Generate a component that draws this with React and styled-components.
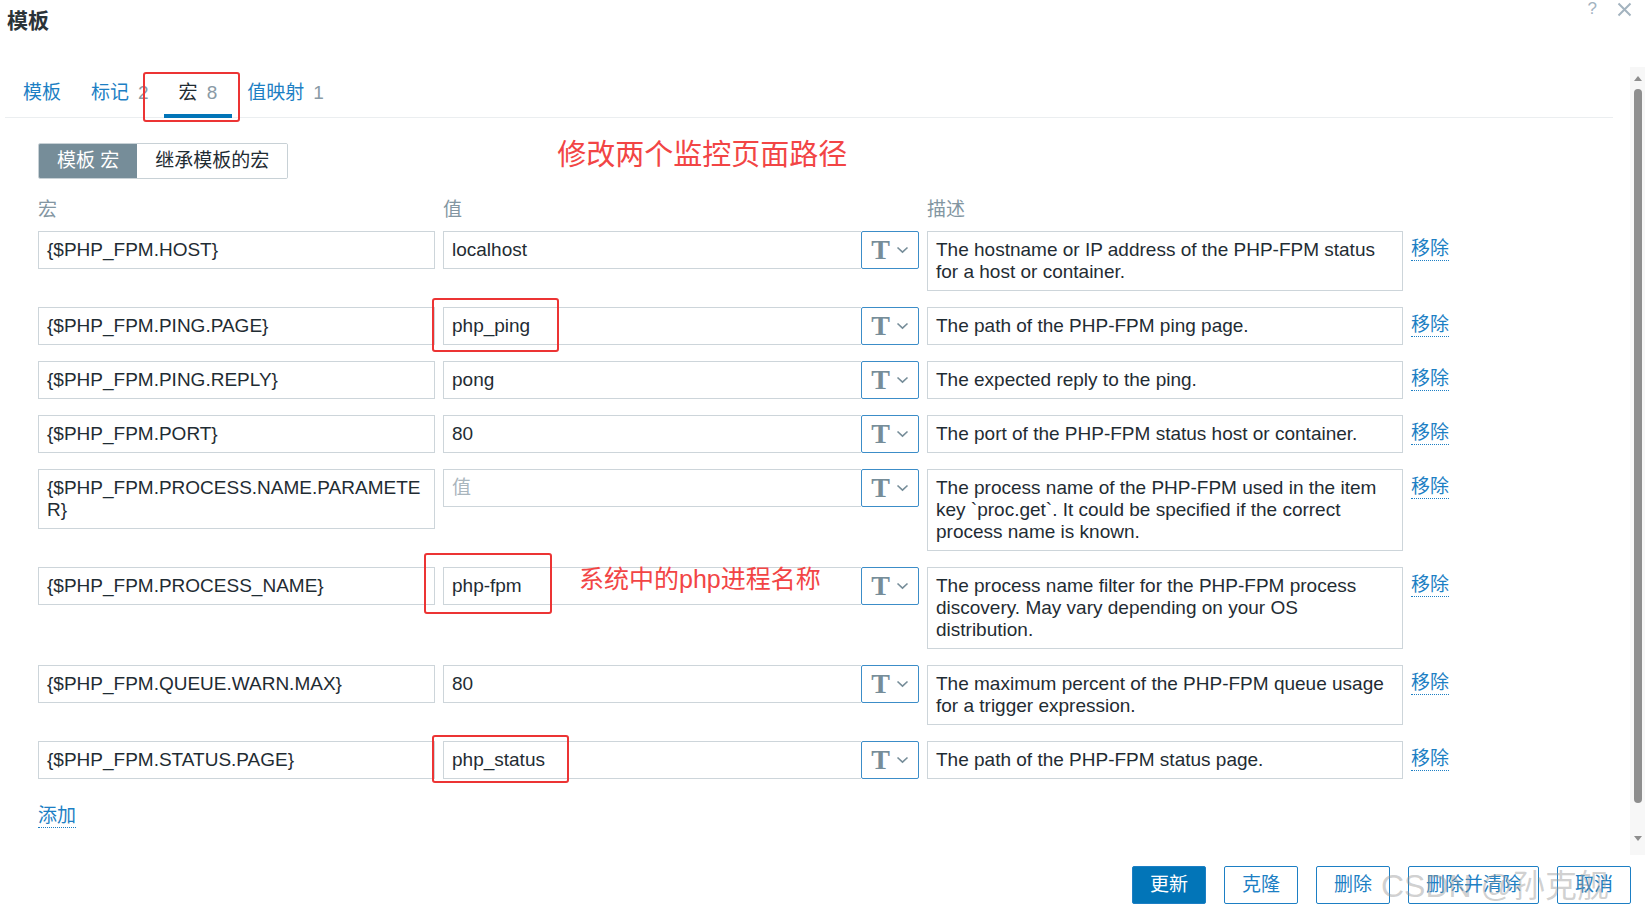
import React from 'react';
import styled, { createGlobalStyle } from 'styled-components';

const rows = [
  { macro: ['{$PHP_FPM.HOST}'], value: 'localhost', desc: ['The hostname or IP address of the PHP-FPM status', 'for a host or container.'] },
  { macro: ['{$PHP_FPM.PING.PAGE}'], value: 'php_ping', desc: ['The path of the PHP-FPM ping page.'], mark: { t: -9, l: -11, w: 127, h: 54 } },
  { macro: ['{$PHP_FPM.PING.REPLY}'], value: 'pong', desc: ['The expected reply to the ping.'] },
  { macro: ['{$PHP_FPM.PORT}'], value: '80', desc: ['The port of the PHP-FPM status host or container.'] },
  { macro: ['{$PHP_FPM.PROCESS.NAME.PARAMETE', 'R}'], value: '', desc: ['The process name of the PHP-FPM used in the item', 'key `proc.get`. It could be specified if the correct', 'process name is known.'] },
  { macro: ['{$PHP_FPM.PROCESS_NAME}'], value: 'php-fpm', desc: ['The process name filter for the PHP-FPM process', 'discovery. May vary depending on your OS', 'distribution.'], mark: { t: -14, l: -19, w: 128, h: 61 }, note: '系统中的php进程名称' },
  { macro: ['{$PHP_FPM.QUEUE.WARN.MAX}'], value: '80', desc: ['The maximum percent of the PHP-FPM queue usage', 'for a trigger expression.'] },
  { macro: ['{$PHP_FPM.STATUS.PAGE}'], value: 'php_status', desc: ['The path of the PHP-FPM status page.'], mark: { t: -6, l: -11, w: 137, h: 48 } },
];

const tabs = [
  { label: '模板' },
  { label: '标记', count: 2 },
  { label: '宏', count: 8, active: true },
  { label: '值映射', count: 1 },
];

function Chevron() {
  return (
    <svg width="13" height="8" viewBox="0 0 13 8">
      <polyline points="1.5,1.5 6.5,6.2 11.5,1.5" fill="none" stroke="#768d99" strokeWidth="1.6" />
    </svg>
  );
}

function App() {
  return (
    <>
      <Global />
      <Page>
        <Header>
          <Title>模板</Title>
          <HeaderIcons>
            <HelpIcon>?</HelpIcon>
            <svg width="15" height="15" viewBox="0 0 15 15">
              <path d="M1.5 1.5 L13.5 13.5 M13.5 1.5 L1.5 13.5" stroke="#a3b3bf" strokeWidth="2" />
            </svg>
          </HeaderIcons>
        </Header>
        <Body>
          <Main>
            <TabBar>
              {tabs.map((t) => (
                <Tab key={t.label} $active={t.active}>
                  {t.label}
                  {t.count && <Count>{t.count}</Count>}
                  {t.active && <MarkBox $t={5} $l={-21} $w={97} $h={50} />}
                </Tab>
              ))}
            </TabBar>
            <Form>
              <TopRow>
                <Segmented>
                  <Segment $active>模板 宏</Segment>
                  <Segment>继承模板的宏</Segment>
                </Segmented>
                <Annotation>修改两个监控页面路径</Annotation>
              </TopRow>
              <Grid>
                <HeadCell>宏</HeadCell>
                <HeadCell>值</HeadCell>
                <HeadCell>描述</HeadCell>
                <span />
              </Grid>
              <Rows>
                {rows.map((r) => (
                  <Grid key={r.macro.join('')}>
                    <Field>
                      {r.macro.map((l) => <Line key={l}>{l}</Line>)}
                    </Field>
                    <ValueGroup>
                      <ValueField $empty={!r.value}>{r.value || '值'}</ValueField>
                      <TypeButton>
                        <TGlyph>T</TGlyph>
                        <Chevron />
                      </TypeButton>
                      {r.mark && <MarkBox $t={r.mark.t} $l={r.mark.l} $w={r.mark.w} $h={r.mark.h} />}
                      {r.note && <Note>{r.note}</Note>}
                    </ValueGroup>
                    <Field>
                      {r.desc.map((l) => <Line key={l}>{l}</Line>)}
                    </Field>
                    <LinkText>移除</LinkText>
                  </Grid>
                ))}
              </Rows>
              <AddLink>添加</AddLink>
            </Form>
          </Main>
          <Scrollbar>
            <Arrow viewBox="0 0 10 6"><polygon points="1,6 5,1 9,6" fill="#8e8e8e" /></Arrow>
            <Thumb />
            <Arrow viewBox="0 0 10 6"><polygon points="1,0 5,5 9,0" fill="#8e8e8e" /></Arrow>
          </Scrollbar>
        </Body>
        <Footer>
          <Button $primary>更新</Button>
          <Button>克隆</Button>
          <Button>删除</Button>
          <Button>删除并清除</Button>
          <Button>取消</Button>
          <Watermark>CSDN @孙克舰</Watermark>
        </Footer>
      </Page>
    </>
  );
}

export default App;

const Global = createGlobalStyle`
  * { box-sizing: border-box; }
  body {
    margin: 0;
    background: #fff;
    font-family: "Liberation Sans", Arial, "Noto Sans CJK SC", sans-serif;
    color: #1f2c33;
  }
`;

const Page = styled.div`
  width: 1645px;
  height: 906px;
  overflow: hidden;
  display: flex;
  flex-direction: column;
`;

const Header = styled.div`
  height: 67px;
  display: flex;
  justify-content: space-between;
  align-items: flex-start;
  padding: 0 13px 0 7px;
`;

const Title = styled.h2`
  margin: 8px 0 0;
  font-size: 21px;
  line-height: 25px;
  font-weight: bold;
  color: #2b3338;
`;

const HeaderIcons = styled.div`
  display: flex;
  align-items: center;
  gap: 20px;
  padding-top: 1px;
`;

const HelpIcon = styled.span`
  font-size: 17px;
  line-height: 16px;
  color: #a3b3bf;
`;

const Body = styled.div`
  height: 788px;
  display: flex;
`;

const Main = styled.div`
  flex: 1;
  padding: 0 17px 0 5px;
  overflow: hidden;
`;

const TabBar = styled.div`
  display: flex;
  padding-left: 3px;
  border-bottom: 1px solid #ebeef0;
  height: 51px;
`;

const Tab = styled.div`
  position: relative;
  padding: 15px 15px 0;
  height: 51px;
  font-size: 19px;
  line-height: 22px;
  color: ${(p) => (p.$active ? '#1f2c33' : '#1d7fc4')};
  border-bottom: 4px solid ${(p) => (p.$active ? '#0275b8' : 'transparent')};
`;

const Count = styled.span`
  margin-left: 9px;
  color: #8a9aa5;
`;

const MarkBox = styled.div`
  position: absolute;
  top: ${(p) => p.$t}px;
  left: ${(p) => p.$l}px;
  width: ${(p) => p.$w}px;
  height: ${(p) => p.$h}px;
  border: 2px solid #ec3434;
  border-radius: 3px;
  pointer-events: none;
`;

const Form = styled.div`
  padding-left: 33px;
`;

const TopRow = styled.div`
  display: flex;
  align-items: flex-start;
  margin-top: 25px;
`;

const Segmented = styled.div`
  display: flex;
  height: 36px;
  border: 1px solid #c8d1d6;
  border-radius: 2px;
  overflow: hidden;
`;

const Segment = styled.div`
  padding: 0 18px;
  font-size: 19px;
  line-height: 34px;
  background: ${(p) => (p.$active ? '#768d99' : '#fff')};
  color: ${(p) => (p.$active ? '#fff' : '#1f2c33')};
`;

const Annotation = styled.div`
  margin: -8px 0 0 269px;
  font-size: 29px;
  line-height: 40px;
  color: #f24545;
`;

const Grid = styled.div`
  display: grid;
  grid-template-columns: 397px 476px 476px auto;
  column-gap: 8px;
  align-items: start;
`;

const HeadCell = styled.div`
  margin-top: 20px;
  font-size: 19px;
  line-height: 22px;
  color: #8396a2;
`;

const Rows = styled.div`
  display: flex;
  flex-direction: column;
  gap: 16px;
  margin-top: 10px;
`;

const Field = styled.div`
  min-height: 38px;
  border: 1px solid #cdd5da;
  padding: 7px 8px;
  font-size: 19px;
  line-height: 22px;
  color: #1f2c33;
`;

const Line = styled.div`
  white-space: nowrap;
`;

const ValueGroup = styled.div`
  position: relative;
  display: flex;
`;

const ValueField = styled(Field)`
  flex: 1;
  height: 38px;
  border-right: none;
  color: ${(p) => (p.$empty ? '#a9b5bd' : '#1f2c33')};
`;

const TypeButton = styled.div`
  width: 58px;
  height: 38px;
  border: 1px solid #3c8dc8;
  border-radius: 2px;
  display: flex;
  align-items: center;
  justify-content: center;
  gap: 6px;
`;

const TGlyph = styled.span`
  font-family: "Liberation Serif", "DejaVu Serif", serif;
  font-weight: bold;
  font-size: 28px;
  line-height: 28px;
  color: #768d99;
`;

const Note = styled.div`
  position: absolute;
  left: 136px;
  top: -3px;
  font-size: 25px;
  line-height: 30px;
  color: #f24545;
  white-space: nowrap;
`;

const LinkText = styled.span`
  justify-self: start;
  margin-top: 7px;
  font-size: 19px;
  line-height: 22px;
  color: #1d7fc4;
  border-bottom: 1px dotted #1d7fc4;
`;

const AddLink = styled(LinkText)`
  display: inline-block;
  margin-top: 26px;
`;

const Scrollbar = styled.div`
  width: 15px;
  background: #f7f7f7;
  display: flex;
  flex-direction: column;
  align-items: center;
  padding-top: 8px;
`;

const Arrow = styled.svg`
  width: 10px;
  height: 6px;
`;

const Thumb = styled.div`
  width: 8px;
  height: 714px;
  margin: 8px 0 33px;
  border-radius: 4px;
  background: #8e8e8e;
`;

const Footer = styled.div`
  position: relative;
  display: flex;
  justify-content: flex-end;
  gap: 18px;
  padding: 11px 14px 0 0;
`;

const Button = styled.div`
  height: 38px;
  padding: 0 17px;
  font-size: 19px;
  line-height: 36px;
  border: 1px solid #1d7fc4;
  border-radius: 2px;
  background: ${(p) => (p.$primary ? '#0275b8' : '#fff')};
  color: ${(p) => (p.$primary ? '#fff' : '#1d7fc4')};
`;

const Watermark = styled.div`
  position: absolute;
  right: 36px;
  top: 12px;
  font-size: 32px;
  line-height: 38px;
  color: rgba(150, 150, 150, 0.45);
  white-space: nowrap;
  pointer-events: none;
`;
